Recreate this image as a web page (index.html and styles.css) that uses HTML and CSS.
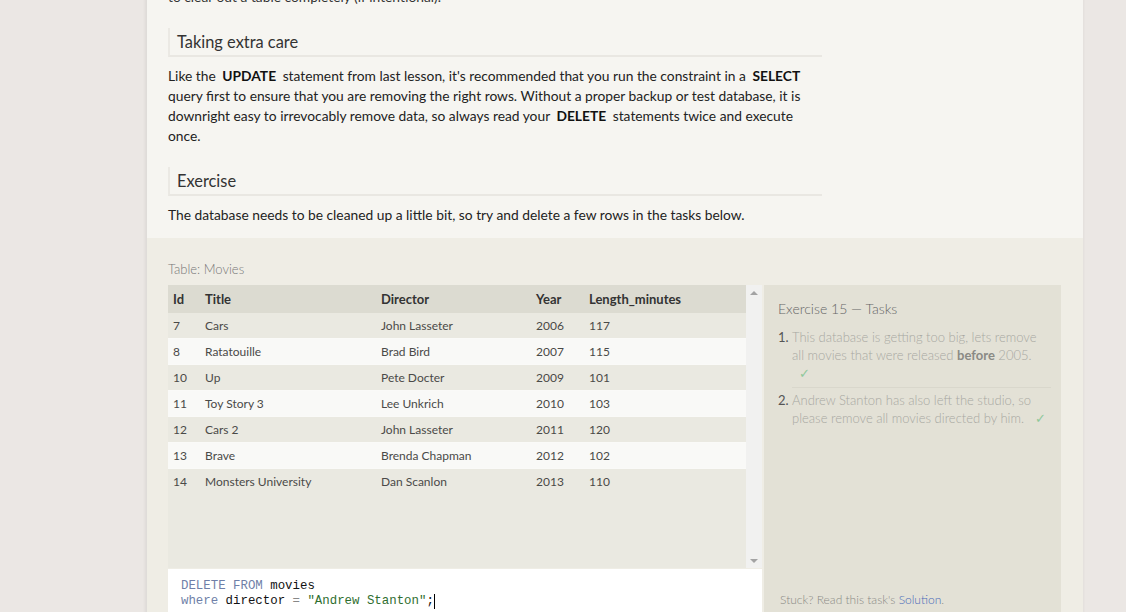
FILE: index.html
```html
<!DOCTYPE html>
<html>
<head>
<meta charset="utf-8">
<link rel="stylesheet" href="styles.css">
</head>
<body>
<div class="page">
  <div class="lesson">
    <p class="clipped">to clear out a table completely (if intentional).</p>
    <h3 class="heading">Taking extra care</h3>
    <p class="para">Like the <b class="kw">UPDATE</b> statement from last lesson, it's recommended that you run the constraint in a <b class="kw">SELECT</b> query first to ensure that you are removing the right rows. Without a proper backup or test database, it is downright easy to irrevocably remove data, so always read your <b class="kw">DELETE</b> statements twice and execute once.</p>
    <h3 class="heading">Exercise</h3>
    <p class="para">The database needs to be cleaned up a little bit, so try and delete a few rows in the tasks below.</p>
  </div>
  <div class="exercise">
    <div class="table-label">Table: Movies</div>
    <div class="ex-row">
      <div class="left">
        <div class="table-box">
          <div class="table-scroll">
            <table class="movies">
              <thead>
                <tr><th class="c-id">Id</th><th class="c-title">Title</th><th class="c-dir">Director</th><th class="c-year">Year</th><th>Length_minutes</th></tr>
              </thead>
              <tbody>
                <tr><td>7</td><td>Cars</td><td>John Lasseter</td><td>2006</td><td>117</td></tr>
                <tr><td>8</td><td>Ratatouille</td><td>Brad Bird</td><td>2007</td><td>115</td></tr>
                <tr><td>10</td><td>Up</td><td>Pete Docter</td><td>2009</td><td>101</td></tr>
                <tr><td>11</td><td>Toy Story 3</td><td>Lee Unkrich</td><td>2010</td><td>103</td></tr>
                <tr><td>12</td><td>Cars 2</td><td>John Lasseter</td><td>2011</td><td>120</td></tr>
                <tr><td>13</td><td>Brave</td><td>Brenda Chapman</td><td>2012</td><td>102</td></tr>
                <tr><td>14</td><td>Monsters University</td><td>Dan Scanlon</td><td>2013</td><td>110</td></tr>
              </tbody>
            </table>
          </div>
          <div class="scrollbar">
            <span class="arrow up"></span>
            <span class="arrow down"></span>
          </div>
        </div>
        <div class="editor">
          <div class="code-line"><span class="k">DELETE FROM</span> movies</div>
          <div class="code-line"><span class="k">where</span> director <span class="op">=</span> <span class="str">"Andrew Stanton"</span>;<span class="cursor"></span></div>
        </div>
      </div>
      <div class="tasks">
        <div class="tasks-title">Exercise 15 — Tasks</div>
        <ol class="task-list">
          <li class="task">This database is getting too big, lets remove all movies that were released <b>before</b> 2005.<br><span class="check">✓</span></li>
          <li class="task">Andrew Stanton has also left the studio, so please remove all movies directed by him. <span class="check">✓</span></li>
        </ol>
        <div class="stuck">Stuck? Read this task's <span class="link">Solution</span>.</div>
      </div>
    </div>
  </div>
</div>
</body>
</html>
```
FILE: styles.css
```css
html, body {
  margin: 0;
  padding: 0;
  height: 100%;
  overflow: hidden;
}
body {
  background: #ebe7e4;
  font-family: Lato, "Open Sans", sans-serif;
  color: #333;
}
.page {
  margin-left: 147px;
  width: 936px;
  background: #f6f5f1;
  box-shadow: -2px 0 3px rgba(0,0,0,0.06), 1px 0 2px rgba(0,0,0,0.04);
  min-height: 100%;
}
.lesson {
  padding: 0 261px 0 21px;
}
.clipped {
  margin: -13px 0 0 0;
  font-size: 13.8px;
  line-height: 20px;
}
.heading {
  margin: 21px 0 0 0;
  padding: 4px 9px 4px 7px;
  font-weight: 400;
  font-size: 16.4px;
  line-height: 19px;
  color: #333;
  border-left: 2px solid #ebe9e4;
  border-bottom: 2px solid #e9e7e2;
}
.para {
  margin: 9px 0 0 0;
  font-size: 13.8px;
  line-height: 20px;
  color: #222;
}
.kw {
  font-weight: 700;
  padding: 0 3px;
  color: #111;
}
.exercise {
  margin-top: 13px;
  background: #efede5;
  padding: 23px 21px 0 21px;
  height: 400px;
}
.table-label {
  font-size: 13px;
  font-weight: 300;
  color: #777;
  line-height: 16px;
  margin-bottom: 8px;
}
.ex-row {
  display: flex;
  gap: 2px;
}
.left {
  width: 594px;
  display: flex;
  flex-direction: column;
  gap: 1px;
}
.table-box {
  display: flex;
  height: 283px;
  background: #eae9e1;
}
.table-scroll {
  flex: 1;
}
.movies {
  width: 100%;
  border-collapse: collapse;
  font-size: 12px;
}
.movies th {
  text-align: left;
  font-weight: 700;
  font-size: 13px;
  color: #333;
  background: #dcdbd1;
  height: 28px;
  padding: 0 0 0 5px;
}
.movies td {
  height: 25px;
  padding: 0 0 0 5px;
  font-weight: 400;
  color: #4a4a48;
  border-bottom: 1px solid #fafaf8;
}
.movies tbody tr:nth-child(odd) td { background: #eae9e1; }
.movies tbody tr:nth-child(even) td { background: #f9f9f7; }
.movies tbody tr:last-child td { border-bottom: none; }
.c-id { width: 27px; }
.c-title { width: 171px; }
.c-dir { width: 150px; }
.c-year { width: 48px; }
.scrollbar {
  width: 16px;
  background: #f1f1f0;
  display: flex;
  flex-direction: column;
  justify-content: space-between;
  align-items: center;
  padding: 6px 0 5px 0;
  box-sizing: border-box;
}
.arrow {
  width: 0;
  height: 0;
  border-left: 4px solid transparent;
  border-right: 4px solid transparent;
}
.arrow.up { border-bottom: 4px solid #a3a3a3; }
.arrow.down { border-top: 4px solid #a3a3a3; }
.editor {
  background: #ffffff;
  height: 120px;
  padding: 10px 13px;
  box-sizing: border-box;
  font-family: "Liberation Mono", "DejaVu Sans Mono", monospace;
  font-size: 12.4px;
  line-height: 15px;
  color: #111;
}
.code-line { white-space: pre; }
.k { color: #6f7fa8; }
.op { color: #888; }
.str { color: #2f6e2f; }
.cursor {
  display: inline-block;
  width: 1px;
  height: 15px;
  background: #000;
  vertical-align: top;
}
.tasks {
  width: 297px;
  height: 360px;
  background: #e3e1d6;
  padding: 15px 10px 0 14px;
  box-sizing: border-box;
  display: flex;
  flex-direction: column;
  font-weight: 300;
}
.tasks-title {
  font-size: 14px;
  color: #666;
  line-height: 18px;
}
.task-list {
  margin: 10px 0 0 0;
  padding: 0 0 0 14px;
  font-size: 13px;
  line-height: 18px;
  color: #a8a8a2;
}
.task {
  padding: 0 0 5px 0;
}
.task + .task {
  border-top: 1px solid #d9d7cc;
  padding-top: 3px;
}
.task::marker {
  color: #555;
  font-weight: 400;
}
.task b {
  font-weight: 700;
  color: #8a8a85;
}
.check {
  color: #8fc89a;
  padding-left: 7px;
}
.stuck {
  margin-top: auto;
  margin-bottom: 38px;
  font-size: 12px;
  color: #8a8a85;
  padding-left: 2px;
}
.link { color: #4a6ab8; }
```
